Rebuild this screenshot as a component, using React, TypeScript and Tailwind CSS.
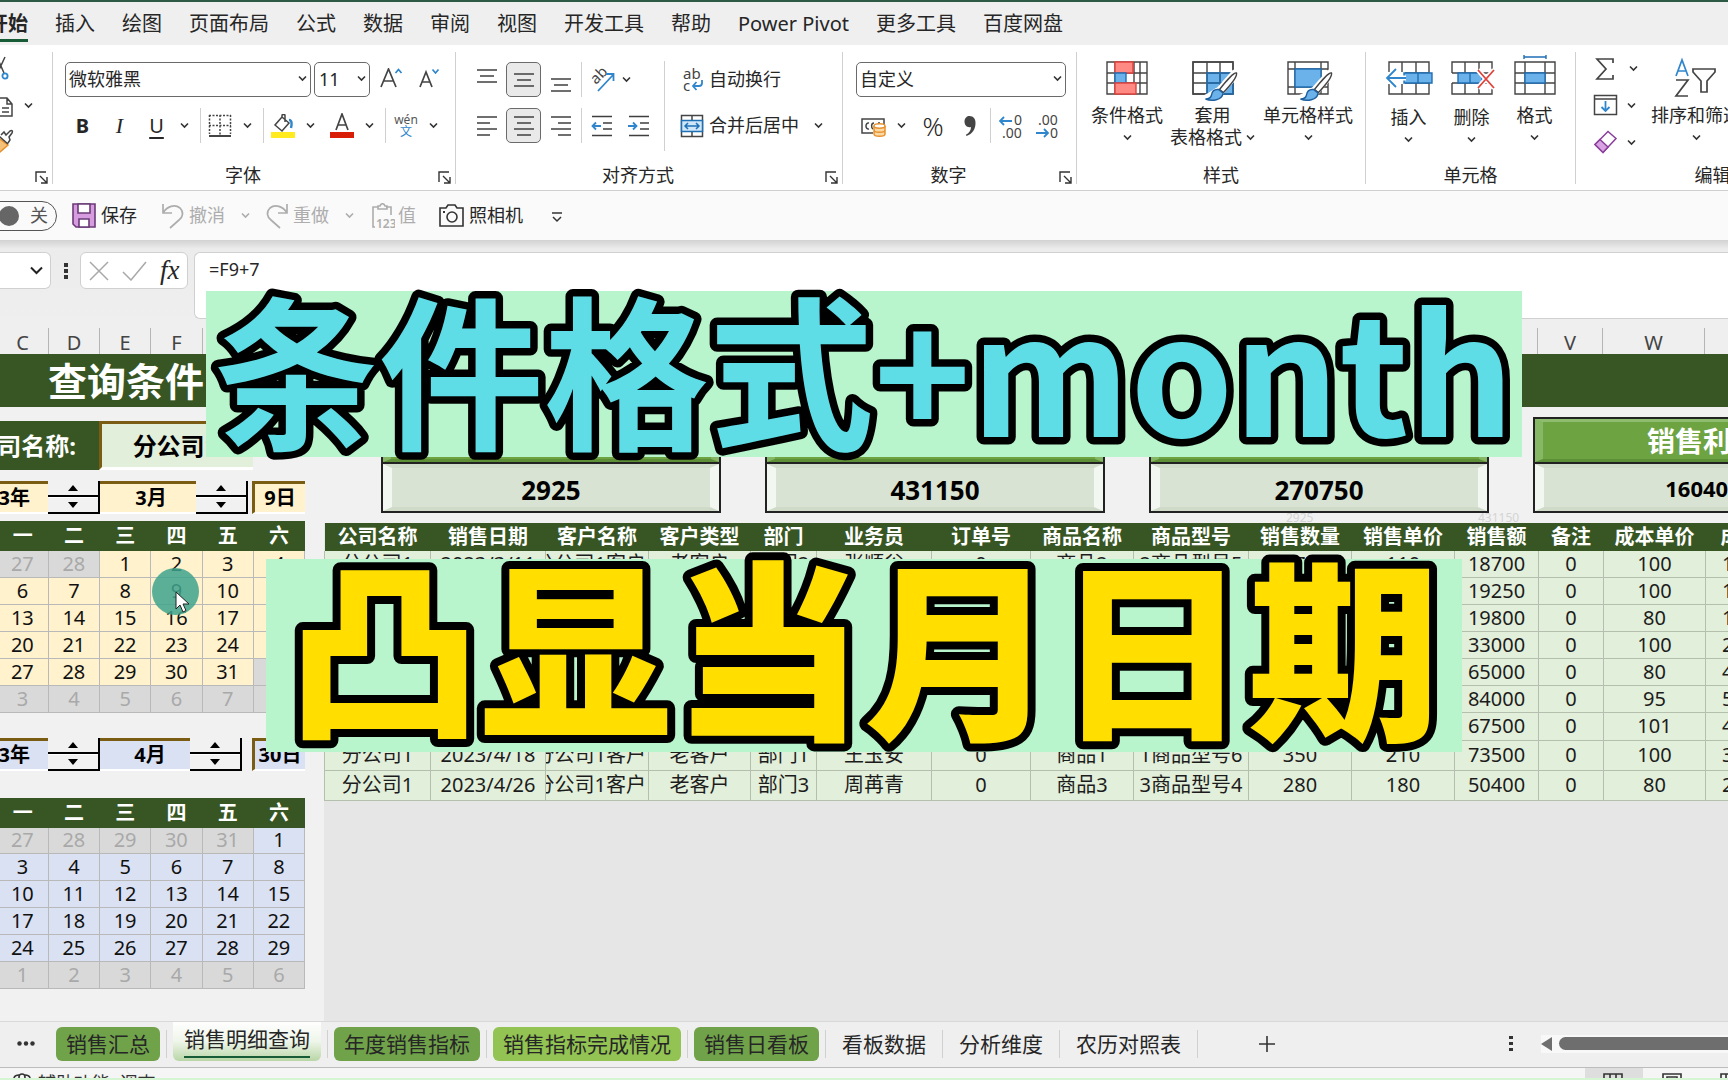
import React from "react";

type Kids = { children?: React.ReactNode };

/* ---------- small shared pieces ---------- */

function Chevron({ className = "text-[#333]" }: { className?: string }) {
  return (
    <svg width="9" height="7" viewBox="0 0 9 7" className={className} fill="none" stroke="currentColor" strokeWidth="1.6">
      <path d="M1 1.500l3.500 3.500L8 1.500" />
    </svg>
  );
}

function Drop({ label, className = "w-[30px]" }: { label: string; className?: string }) {
  return (
    <button aria-label={label} className={`flex h-6 shrink-0 items-center justify-center ${className}`}>
      <Chevron />
    </button>
  );
}

function Rule({ className = "" }: { className?: string }) {
  return <div className={`w-px shrink-0 bg-[#d0d0d0] ${className}`} />;
}

function Launcher() {
  return (
    <button aria-label="对话框启动器" className="absolute right-[4px] bottom-0">
      <svg width="13" height="13" viewBox="0 0 13 13" fill="none" stroke="#333" strokeWidth="1.400">
        <path d="M1 11V1h10M5 5l6.500 6.500M12 6v6H6" />
      </svg>
    </button>
  );
}

function Group({ name, width, launcher, children }: Kids & { name: string; width: string; launcher?: boolean }) {
  return (
    <section aria-label={name} className={`relative flex h-[132px] shrink-0 flex-col border-r border-[#d0d0d0] ${width}`}>
      <div className="flex-1">{children}</div>
      <div className={`flex h-[18px] items-center justify-center text-[18px] leading-[18px] ${launcher ? "pr-[22px]" : ""}`}>{name}</div>
      {launcher && <Launcher />}
    </section>
  );
}

function Lines({ rows }: { rows: [number, number, number][] }) {
  return (
    <svg width="22" height="24" viewBox="0 0 22 24" stroke="#3f3f3f" strokeWidth="1.500">
      {rows.map(([y, a, b]) => (
        <path key={y} d={`M${a} ${y}H${b}`} />
      ))}
    </svg>
  );
}

function AlignButton({ label, rows, on, className = "" }: { label: string; rows: [number, number, number][]; on?: boolean; className?: string }) {
  return (
    <button
      aria-label={label}
      className={`flex h-[35px] w-[35px] shrink-0 items-center justify-center ${on ? "rounded-[5px] border border-[#6a6a6a] bg-[#e9e9e9]" : ""} ${className}`}
    >
      <Lines rows={rows} />
    </button>
  );
}

/* ---------- ribbon icons ---------- */

const BigGrid = ({ children }: Kids) => (
  <svg width="50" height="46" viewBox="0 0 50 46" fill="none" stroke="#444" strokeWidth="1.400">
    {children}
  </svg>
);

const Brush = () => (
  <g>
    <path d="M48.500 17.500L32 36C28 37 26 41 17.500 44.500" stroke="#fff" strokeWidth="9" />
    <path d="M48.500 18c.8 3-5 11-13 19.500l-4-3C38 26 46.500 17 48.500 18z" fill="#fff" stroke="#444" />
    <path d="M30.500 34.500c-4.500-.5-6.500 2-7 5.500-.5 2.500-3 4-6 4 6 2.500 17 1.500 17.500-6z" fill="#6cb2ea" stroke="#1f5f9c" />
  </g>
);

const ConditionalIcon = () => (
  <BigGrid>
    <path d="M5 7h40v32H5zM5 18h40M5 28h40M13 7v32M32 7v32M38 7v32" fill="#fff" />
    <path d="M13 7h18v11H13z" fill="#ff8a84" stroke="#e0423c" />
    <path d="M13 18h11v10H13z" fill="#6cb2ea" stroke="#1f6fb5" />
    <path d="M25 19h6v8h-6z" fill="#fff" stroke="none" />
    <path d="M13 28h21v11H13z" fill="#ff8a84" stroke="#e0423c" />
  </BigGrid>
);

const TableStyleIcon = () => (
  <BigGrid>
    <path d="M5 7h40v32H5z" fill="#fff" />
    <path d="M19 18h26v21H19z" fill="#6cb2ea" stroke="none" />
    <path d="M5 7h40v32H5zM5 18h40M5 28h40M19 7v32M32 7v32" />
    <path d="M19 18h26v21H19zM19 28h26M32 18v21" stroke="#1f6fb5" />
    <Brush />
  </BigGrid>
);

const CellStyleIcon = () => (
  <BigGrid>
    <path d="M5 7h40v32H5zM5 14h40M5 32h40M12 7v32M38 7v32" fill="#fff" />
    <path d="M12 14h26v18H12z" fill="#6cb2ea" stroke="#1f6fb5" />
    <Brush />
  </BigGrid>
);

const InsertIcon = () => (
  <BigGrid>
    <path d="M5 7h40v32H5zM18 7v32M32 7v32M5 18h40M5 28h40" fill="#fff" />
    <path d="M3 17h18v12H3z" fill="#fff" stroke="none" />
    <path d="M20 18h28v10H20z" fill="#6cb2ea" stroke="#1f6fb5" />
    <path d="M34 18v10" stroke="#1f6fb5" />
    <path d="M3 23h19M12 14l-9 9 9 9" stroke="#fff" strokeWidth="5" />
    <path d="M3 23h19M12 14l-9 9 9 9" stroke="#2f86cc" strokeWidth="1.800" />
  </BigGrid>
);

const DeleteIcon = () => (
  <BigGrid>
    <path d="M5 18V7h40v8M5 28v11h40v-8M18 7v11M32 7v11M18 28v11M32 28v11M5 18h40M5 28h40" />
    <path d="M11 18h24v10H11z" fill="#6cb2ea" stroke="#1f6fb5" />
    <path d="M23 18v10" stroke="#1f6fb5" />
    <path d="M31 15l16 18M47 15L31 33" stroke="#fff" strokeWidth="5" />
    <path d="M31 15l16 18M47 15L31 33" stroke="#e0423c" strokeWidth="1.800" />
  </BigGrid>
);

const FormatIcon = () => (
  <BigGrid>
    <path d="M5 7h40v32H5zM15 7v32M35 7v32M5 18h40M5 28h40" fill="#fff" />
    <path d="M15 18h20v10H15z" fill="#6cb2ea" stroke="#1f6fb5" />
    <path d="M14 2h22M14 0v4M36 0v4" stroke="#1f6fb5" />
  </BigGrid>
);

function BigButton({ icon, lines, width, drop = "below", low }: { icon: React.ReactNode; lines: string[]; width: string; drop?: "below" | "inline"; low?: boolean }) {
  return (
    <button className={`flex shrink-0 flex-col items-center pt-[3px] text-[18px] leading-[22px] whitespace-nowrap ${width}`}>
      {icon}
      <span className={low ? "mt-[5px]" : "mt-[3px]"}>{lines[0]}</span>
      {drop === "inline" ? (
        <span className="flex items-center gap-[4px]">
          {lines[1]}
          <Chevron />
        </span>
      ) : (
        <span className="mt-[8px]">
          <Chevron />
        </span>
      )}
    </button>
  );
}

/* ---------- ribbon ---------- */

function MenuBar() {
  const tabs = ["插入", "绘图", "页面布局", "公式", "数据", "审阅", "视图", "开发工具", "帮助", "Power Pivot", "更多工具", "百度网盘"];
  return (
    <nav className="flex h-[45px] shrink-0 gap-[27px] border-t-2 border-[#2c5a45] bg-[#efefef] text-[20px] leading-[44px] whitespace-nowrap">
      <button className="-ml-3 flex h-[40px] border-b-[3px] border-[#185c37] leading-[44px] font-bold">开始</button>
      {tabs.map((t) => (
        <button key={t} className="flex h-[42px]">
          {t}
        </button>
      ))}
    </nav>
  );
}

function ClipboardGroup() {
  return (
    <section className="relative h-[132px] w-[53px] shrink-0 border-r border-[#d0d0d0]">
      <svg width="36" height="105" viewBox="0 0 36 105" fill="none" stroke="#444" strokeWidth="1.500" className="block">
        <path d="M5 5L-2 20M-3 5L4 21" />
        <circle cx="5" cy="24" r="2.600" stroke="#2f86cc" strokeWidth="1.800" />
        <path d="M-3 46h10l5 6v12H-3zM7 46v6h5M2 56h7M2 60h7" />
        <path d="M0 87l8 6-9 8" fill="#f6c27a" stroke="#e8912d" />
        <path d="M-1 84l9 8M1 83l3-3 2 3 4-4c2-1 3 0 2 2l-3 4 1 3-2 3" />
      </svg>
      <button aria-label="复制选项" className="absolute top-[50px] left-[24px]">
        <Chevron />
      </button>
      <Launcher />
    </section>
  );
}

function FontGroup() {
  return (
    <Group name="字体" width="w-[403px]" launcher>
      <div className="mt-[10px] flex h-[35px] items-center pl-[12px]">
        <div className="relative">
          <select aria-label="字体" className="h-[35px] w-[246px] appearance-none rounded-[5px] border border-[#6a6a6a] bg-white pl-[3px] text-[18px]">
            <option>微软雅黑</option>
          </select>
          <span className="pointer-events-none absolute top-[13px] right-[4px] flex"><Chevron /></span>
        </div>
        <div className="relative ml-[3px]">
          <select aria-label="字号" className="h-[35px] w-[56px] appearance-none rounded-[5px] border border-[#6a6a6a] bg-white pl-[4px] text-[18px]">
            <option>11</option>
          </select>
          <span className="pointer-events-none absolute top-[13px] right-[4px] flex"><Chevron /></span>
        </div>
        <button aria-label="增大字号" className="ml-[10px]">
          <svg width="24" height="24" viewBox="0 0 24 24" fill="none" stroke="#444" strokeWidth="1.700">
            <path d="M1 19L8.500 1 16 19M4 13h9.500" />
            <path d="M15.500 5l3-3.500 3 3.500" stroke="#2f86cc" />
          </svg>
        </button>
        <button aria-label="减小字号" className="ml-[14px]">
          <svg width="24" height="24" viewBox="0 0 24 24" fill="none" stroke="#444" strokeWidth="1.700">
            <path d="M2 19L8 4l6 15M4 14h8" />
            <path d="M14.500 1.500l3 3.500 3-3.500" stroke="#2f86cc" />
          </svg>
        </button>
      </div>
      <div className="mt-[11px] flex h-[35px] items-center pl-[11px] text-[20px]">
        <button className="w-[37px] font-bold">B</button>
        <button className="w-[37px] font-['Liberation_Serif'] text-[22px] italic">I</button>
        <button className="w-[37px] underline underline-offset-4">U</button>
        <Drop label="下划线" className="w-[18px]" />
        <Rule className="mx-[7px] h-[35px]" />
        <button aria-label="边框">
          <svg width="24" height="24" viewBox="0 0 24 24" fill="none" stroke="#444" strokeWidth="1.500">
            <path d="M1 1.500h22M1.500 1v19M22.500 1v19M12 1v20M1 11.500h22" strokeDasharray="2 1.500" />
            <path d="M1 22h22" strokeWidth="2" />
          </svg>
        </button>
        <Drop label="边框选项" />
        <Rule className="mr-[7px] ml-px h-[35px]" />
        <button aria-label="填充颜色">
          <svg width="24" height="24" viewBox="0 0 24 24" fill="none" stroke="#444" strokeWidth="1.500">
            <path d="M0 18h24v6H0z" fill="#ffeb1f" stroke="none" />
            <path d="M11 3L4 11l7 6 7-8-7-6V1.500c0-1.500 3-1.500 3 0V8" />
            <path d="M18 6c3 0 3 4 2 8" stroke="#2f86cc" strokeWidth="2.400" />
          </svg>
        </button>
        <Drop label="填充选项" />
        <button aria-label="字体颜色" className="ml-[5px]">
          <svg width="24" height="26" viewBox="0 0 24 26" fill="none" stroke="#444" strokeWidth="1.700">
            <path d="M0 19h24v6H0z" fill="#d81e06" stroke="none" />
            <path d="M6 17l6-16 6 16M8 12h8" />
          </svg>
        </button>
        <Drop label="字体颜色选项" />
        <Rule className="mr-[8px] ml-px h-[35px]" />
        <button className="flex w-[24px] flex-col items-center text-[12px] leading-[12px] text-[#555]">
          <span>wén</span>
          <span className="text-[#2f86cc]">文</span>
        </button>
        <Drop label="拼音选项" />
      </div>
    </Group>
  );
}

function AlignGroup() {
  return (
    <Group name="对齐方式" width="w-[387px]" launcher>
      <div className="flex">
        <div className="pt-[10px] pl-[13px]">
          <div className="flex items-center">
            <AlignButton label="顶端对齐" rows={[[2, 1, 21], [8, 4, 18], [14, 1, 21]]} />
            <AlignButton label="垂直居中" on className="ml-[2px]" rows={[[6, 1, 21], [12, 4, 18], [18, 1, 21]]} />
            <AlignButton label="底端对齐" className="ml-[2px]" rows={[[11, 1, 21], [17, 4, 18], [23, 1, 21]]} />
            <Rule className="mx-[3px] h-[35px]" />
            <button aria-label="方向" className="ml-[5px]">
              <svg width="26" height="26" viewBox="0 0 26 26" fill="none" stroke="#2f86cc" strokeWidth="1.800">
                <text x="0" y="0" transform="translate(6 18) rotate(-45)" fontSize="15" fill="#444" stroke="none">ab</text>
                <path d="M8 24L23 8M16 7h7.500v7" />
              </svg>
            </button>
            <Drop label="方向选项" className="w-[20px]" />
          </div>
          <div className="mt-[11px] flex items-center">
            <AlignButton label="左对齐" rows={[[3, 1, 21], [9, 1, 14], [15, 1, 21], [21, 1, 14]]} />
            <AlignButton label="居中" on className="ml-[2px]" rows={[[3, 1, 21], [9, 4, 18], [15, 1, 21], [21, 4, 18]]} />
            <AlignButton label="右对齐" className="ml-[2px]" rows={[[3, 1, 21], [9, 8, 21], [15, 1, 21], [21, 8, 21]]} />
            <Rule className="mr-[9px] ml-[3px] h-[35px]" />
            <button aria-label="减少缩进量">
              <svg width="22" height="24" viewBox="0 0 22 24" fill="none" stroke="#3f3f3f" strokeWidth="1.500">
                <path d="M1 2.500h20M12 9h9M12 15h9M1 21.500h20" />
                <path d="M1 12h9M5 8.500L1.500 12 5 15.500" stroke="#2f86cc" strokeWidth="1.800" />
              </svg>
            </button>
            <button aria-label="增加缩进量" className="ml-[15px]">
              <svg width="22" height="24" viewBox="0 0 22 24" fill="none" stroke="#3f3f3f" strokeWidth="1.500">
                <path d="M1 2.500h20M12 9h9M12 15h9M1 21.500h20" />
                <path d="M0 12h9M5 8.500L8.500 12 5 15.500" stroke="#2f86cc" strokeWidth="1.800" />
              </svg>
            </button>
          </div>
        </div>
        <Rule className="mt-[9px] ml-[14px] h-[90px]" />
        <div className="pt-[10px] pl-[15px] text-[18px]">
          <button className="flex h-[35px] items-center">
            <svg width="25" height="26" viewBox="0 0 25 26" fill="none" stroke="#2f86cc" strokeWidth="1.800">
              <text x="3" y="12" fontSize="15" fill="#444" stroke="none">ab</text>
              <text x="3" y="24" fontSize="15" fill="#444" stroke="none">c</text>
              <path d="M22 13v3c0 2-1 3-3 3h-6M16.500 15L13 19l3.500 4" />
            </svg>
            <span className="ml-[4px]">自动换行</span>
          </button>
          <div className="mt-[11px] flex items-center">
            <button className="flex h-[35px] items-center">
              <svg width="25" height="24" viewBox="0 0 25 24" fill="none" stroke="#444" strokeWidth="1.500">
                <path d="M1.500 1.500h21v21h-21zM12 1v6M12 17v6" />
                <path d="M1.500 6.500h21v11h-21z" fill="#cfe6f8" stroke="#1f6fb5" />
                <path d="M5 12h14M8 9l-3 3 3 3M16 9l3 3-3 3" stroke="#1f6fb5" />
              </svg>
              <span className="ml-[4px]">合并后居中</span>
            </button>
            <Drop label="合并选项" className="w-[38px]" />
          </div>
        </div>
      </div>
    </Group>
  );
}

function NumberGroup() {
  return (
    <Group name="数字" width="w-[234px]" launcher>
      <div className="relative mt-[10px] ml-[13px] w-[210px]">
        <select aria-label="数字格式" className="h-[35px] w-full appearance-none rounded-[5px] border border-[#6a6a6a] bg-white pl-[3px] text-[18px]">
          <option>自定义</option>
        </select>
        <span className="pointer-events-none absolute top-[13px] right-[4px] flex"><Chevron /></span>
      </div>
      <div className="mt-[11px] flex h-[35px] items-center pl-[18px]">
        <button aria-label="会计数字格式">
          <svg width="25" height="24" viewBox="0 0 25 24" fill="none" stroke="#444" strokeWidth="1.500">
            <path d="M12 19H1V5h22v6M8 9c-4-1-4 7 0 6M13 9c-3 0-3 5-1 6M18 8v2" />
            <path d="M13 12v8c0 3 11 3 11 0v-8M13 16c0 3 11 3 11 0" fill="#fbd9a5" stroke="#e8912d" />
            <ellipse cx="18.500" cy="12" rx="5.500" ry="2.200" fill="#fff" stroke="#e8912d" />
          </svg>
        </button>
        <Drop label="货币选项" />
        <button className="ml-[5px] w-[24px] text-[26px] leading-none font-light">%</button>
        <button aria-label="千位分隔样式" className="ml-[18px]">
          <svg width="14" height="24" viewBox="0 0 14 24" fill="#444">
            <path d="M6.500 2c4 0 6 3 6 7 0 6-3 11-9 13l-.6-1.200C6.500 19 8 16 8 13c-4 1-6.500-2-6.500-5.500C1.500 4 4 2 6.500 2z" />
          </svg>
        </button>
        <Rule className="mr-[8px] ml-[13px] h-[35px]" />
        <button aria-label="增加小数位数">
          <svg width="24" height="26" viewBox="0 0 24 26" fill="none" stroke="#2f86cc" strokeWidth="1.800">
            <text x="15" y="12" fontSize="14" fill="#444" stroke="none">0</text>
            <text x="3" y="25" fontSize="14" fill="#444" stroke="none">.00</text>
            <path d="M1 8h12M5 4L1 8l4 4" />
          </svg>
        </button>
        <button aria-label="减少小数位数" className="ml-[12px]">
          <svg width="24" height="26" viewBox="0 0 24 26" fill="none" stroke="#2f86cc" strokeWidth="1.800">
            <text x="3" y="12" fontSize="14" fill="#444" stroke="none">.00</text>
            <text x="15" y="25" fontSize="14" fill="#444" stroke="none">0</text>
            <path d="M1 20h12M9 16l4 4-4 4" />
          </svg>
        </button>
      </div>
    </Group>
  );
}

function Ribbon() {
  return (
    <div className="flex h-[145px] shrink-0 overflow-hidden bg-white pt-[7px]">
      <ClipboardGroup />
      <FontGroup />
      <AlignGroup />
      <NumberGroup />
      <Group name="样式" width="w-[289px]">
        <div className="flex pl-[12px]">
          <BigButton icon={<ConditionalIcon />} lines={["条件格式"]} width="w-[76px]" />
          <BigButton icon={<TableStyleIcon />} lines={["套用", "表格格式"]} width="w-[95px]" drop="inline" />
          <BigButton icon={<CellStyleIcon />} lines={["单元格样式"]} width="w-[96px]" />
        </div>
      </Group>
      <Group name="单元格" width="w-[210px]">
        <div className="flex pl-[11px]">
          <BigButton icon={<InsertIcon />} lines={["插入"]} width="w-[63px]" low />
          <BigButton icon={<DeleteIcon />} lines={["删除"]} width="w-[63px]" low />
          <BigButton icon={<FormatIcon />} lines={["格式"]} width="w-[63px]" />
        </div>
      </Group>
      <Group name="编辑" width="w-[274px]">
        <div className="flex">
          <div className="flex w-[72px] flex-col pl-[17px]">
            <div className="flex h-[33px] items-center">
              <svg width="26" height="22" viewBox="0 0 26 22" fill="none" stroke="#444" strokeWidth="1.700">
                <path d="M20 5V1H4l9 10-9 10h16v-4" />
              </svg>
              <Drop label="求和选项" className="ml-[4px] w-[20px]" />
            </div>
            <div className="flex h-[40px] items-center">
              <svg width="26" height="22" viewBox="0 0 26 22" fill="none" stroke="#444" strokeWidth="1.500">
                <path d="M1.500 1.500h22v19h-22zM1.500 5h22" />
                <path d="M12.500 7v10M8.500 13l4 4 4-4" stroke="#2f86cc" strokeWidth="1.800" />
              </svg>
              <Drop label="向下填充选项" className="ml-[2px] w-[20px]" />
            </div>
            <div className="flex h-[34px] items-center">
              <svg width="26" height="24" viewBox="0 0 26 24" fill="none" stroke="#8a3f9a" strokeWidth="1.500">
                <path d="M2 14.500L15 1.500l8 7-13 14z" fill="#fff" />
                <path d="M2 14.500l5-5 8 7.500-5 5.500z" fill="#d9a2e2" />
              </svg>
              <Drop label="清除选项" className="ml-[2px] w-[20px]" />
            </div>
          </div>
          <BigButton
            icon={
              <svg width="50" height="46" viewBox="0 0 50 46" fill="none" stroke="#444" strokeWidth="1.700">
                <path d="M5 21l6-16 6 16M7 16h8" stroke="#2f86cc" />
                <path d="M5 25h12L5 41h12" />
                <path d="M22 14h22v3l-8 9v11h-6V26l-8-9z" />
              </svg>
            }
            lines={["排序和筛选"]}
            width="w-[96px]"
          />
        </div>
      </Group>
    </div>
  );
}

function QuickAccess() {
  return (
    <div className="flex h-[50px] shrink-0 items-center border-t border-[#cfcfcf] bg-[#fafafa] text-[18px] whitespace-nowrap">
      <button role="switch" aria-checked="false" className="-ml-4 flex h-[30px] w-[73px] items-center gap-[11px] rounded-full border border-[#555] pl-[14px] text-[#555]">
        <span className="h-[20px] w-[20px] rounded-full bg-[#666]" />关
      </button>
      <button className="ml-[15px] flex items-center gap-[5px]">
        <svg width="24" height="25" viewBox="0 0 24 25" fill="#d79be0" stroke="#6b3b78" strokeWidth="1.600">
          <path d="M1 1h22v23H4l-3-3z" />
          <path d="M6 1h12v9H6zM7 24v-8h10v8z" fill="#fff" />
        </svg>
        保存
      </button>
      <button className="ml-[24px] flex items-center gap-[5px] text-[#adadad]" disabled>
        <svg width="23" height="26" viewBox="0 0 23 26" fill="none" stroke="currentColor" strokeWidth="1.700">
          <path d="M2 1v9h9M2 10c4-7 12-9 17-5 4 4 3 9-1 12l-9 8" />
        </svg>
        撤消
      </button>
      <span className="ml-[16px]"><Chevron className="text-[#adadad]" /></span>
      <button className="ml-[16px] flex items-center gap-[4px] text-[#adadad]" disabled>
        <svg width="23" height="26" viewBox="0 0 23 26" fill="none" stroke="currentColor" strokeWidth="1.700">
          <path d="M21 1v9h-9M21 10C17 3 9 1 4 5c-4 4-3 9 1 12l9 8" />
        </svg>
        重做
      </button>
      <span className="ml-[16px]"><Chevron className="text-[#adadad]" /></span>
      <button className="ml-[17px] flex items-center gap-[3px] text-[#adadad]" disabled>
        <svg width="24" height="26" viewBox="0 0 24 26" fill="none" stroke="currentColor" strokeWidth="1.600">
          <path d="M4 24H2V4h5M15 4h5v8M7 6V3h2c1-3 4-3 5 0h2v3z" />
          <text x="5" y="25" fontSize="12" fontWeight="600" fill="currentColor" stroke="none">123</text>
        </svg>
        值
      </button>
      <button className="ml-[23px] flex items-center gap-[5px]">
        <svg width="25" height="24" viewBox="0 0 25 24" fill="none" stroke="#333" strokeWidth="1.600">
          <path d="M1 4h6l2-3h7l2 3h6v18H1z" />
          <circle cx="13" cy="13" r="5" />
          <path d="M4 8h2" strokeWidth="2" />
        </svg>
        照相机
      </button>
      <button aria-label="自定义快速访问工具栏" className="mt-[2px] ml-[28px]">
        <svg width="12" height="12" viewBox="0 0 12 12" fill="none" stroke="#333" strokeWidth="1.500">
          <path d="M1 2h10M2 6l4 4 4-4" />
        </svg>
      </button>
    </div>
  );
}

function FormulaBar() {
  return (
    <div className="flex h-[88px] shrink-0 items-start bg-gradient-to-b from-[#d2d2d2] via-[#ececec] via-10% to-[#efefef] pt-[12px]">
      <button aria-label="名称框" className="flex h-[37px] w-[51px] shrink-0 items-center justify-end rounded-r-[6px] border border-l-0 border-[#d0d0d0] bg-white pr-[7px]">
        <svg width="13" height="9" viewBox="0 0 13 9" fill="none" stroke="#222" strokeWidth="2"><path d="M1 1.500l5.500 5.500L12 1.500" /></svg>
      </button>
      <svg width="29" height="37" viewBox="0 0 29 37" fill="#333" className="shrink-0">
        <path d="M13 11h4v4h-4zM13 17h4v4h-4zM13 23h4v4h-4z" />
      </svg>
      <div className="flex h-[37px] w-[108px] shrink-0 items-center rounded-[6px] border border-[#d0d0d0] bg-white pl-[8px]">
        <button aria-label="取消"><svg width="20" height="20" viewBox="0 0 20 20" fill="none" stroke="#a8a8a8" strokeWidth="1.500"><path d="M1 1l18 18M19 1L1 19" /></svg></button>
        <button aria-label="输入" className="ml-[13px]"><svg width="25" height="20" viewBox="0 0 25 20" fill="none" stroke="#a8a8a8" strokeWidth="1.500"><path d="M1 11l8 8L24 1" /></svg></button>
        <button className="ml-[13px] font-['Liberation_Serif'] text-[27px] leading-none italic">fx</button>
      </div>
      <div className="ml-[6px] h-[67px] flex-1 rounded-l-[6px] border border-r-0 border-[#d0d0d0] bg-white">
        <input aria-label="编辑栏" defaultValue="=F9+7" className="mt-[3px] h-[26px] w-full bg-transparent pl-[14px] text-[18px] outline-none" />
      </div>
    </div>
  );
}

/* ---------- worksheet ---------- */

function ColumnHeaders() {
  const cols: [string, string][] = [
    ["C", "w-[52px]"], ["D", "w-[51px]"], ["E", "w-[51px]"], ["F", "w-[52px]"], ["G", "w-[51px]"], ["H", "w-[51px]"], ["I", "w-[19px]"],
    ["J", "w-[106px]"], ["K", "w-[115px]"], ["L", "w-[103px]"], ["M", "w-[102px]"], ["N", "w-[66px]"], ["O", "w-[115px]"], ["P", "w-[99px]"],
    ["Q", "w-[103px]"], ["R", "w-[115px]"], ["S", "w-[103px]"], ["T", "w-[103px]"], ["U", "w-[84px]"], ["V", "w-[65px]"], ["W", "w-[102px]"], ["X", "w-[90px]"],
  ];
  return (
    <div className="-ml-[3px] flex h-[26px] shrink-0 bg-[#efefef] text-[20px] leading-[30px] text-[#444]">
      {cols.map(([c, w]) => (
        <div key={c} className={`shrink-0 border-r border-[#b5b5b5] text-center ${w}`}>{c}</div>
      ))}
    </div>
  );
}

const Spinner = () => (
  <div className="flex h-[33px] w-[52px] shrink-0 flex-col border-r-2 border-black">
    <button aria-label="增加" className="flex h-[16px] items-center justify-center border-b-2 border-black bg-[#f1f1f1]">
      <svg width="10" height="6" viewBox="0 0 10 6"><path d="M0 6l5-6 5 6z" /></svg>
    </button>
    <button aria-label="减少" className="flex h-[17px] items-center justify-center border-t border-b-2 border-t-white border-b-black bg-[#f1f1f1]">
      <svg width="10" height="6" viewBox="0 0 10 6"><path d="M0 0l5 6 5-6z" /></svg>
    </button>
  </div>
);

function DateRow({ month, day, blue }: { month: string; day: string; blue?: boolean }) {
  const cell = `flex h-[33px] shrink-0 items-center justify-center border-t-[3px] border-b-2 border-t-[#7a5c12] border-b-white ${blue ? "bg-[#d9e1f2]" : "bg-[#fff2cc]"}`;
  return (
    <div className="flex text-[20px] leading-[20px] font-bold whitespace-nowrap text-black">
      <div className={`${cell} w-[51px] justify-end pr-[18px]`}>2023年</div>
      <Spinner />
      <div className={`${cell} ${blue ? "w-[90px] pl-[10px]" : "w-[96px] pl-[6px]"}`}>{month}</div>
      <Spinner />
      <div className={`${cell} ${blue ? "ml-[10px]" : "ml-[4px]"} w-[53px] border-l-[3px] border-l-[#7a5c12]`}>{day}</div>
    </div>
  );
}

function Calendar({ weeks, blue }: { weeks: (number | string)[][]; blue?: boolean }) {
  return (
    <table className="w-[308px] table-fixed border-collapse text-[20px] leading-[24px]">
      <thead>
        <tr className="h-[30px] bg-[#375623] text-white">
          {["一", "二", "三", "四", "五", "六"].map((d) => <th key={d} className="p-0 text-[20px] font-bold">{d}</th>)}
        </tr>
      </thead>
      <tbody className="text-center">
        {weeks.map((w, i) => (
          <tr key={i} className={i === 0 ? "h-[26px]" : "h-[27px]"}>
            {w.map((d, j) => (
              <td
                key={j}
                className={`border-r border-b border-[#b9b9b9] p-0 ${typeof d === "string" ? "bg-[#d9d9d9] text-[#a9a9a9]" : blue ? "bg-[#d9e1f2] text-[#111]" : "bg-[#fff2cc] text-[#111]"}`}
              >
                {d}
              </td>
            ))}
          </tr>
        ))}
      </tbody>
    </table>
  );
}

const march = [
  ["27", "28", 1, 2, 3, 4], [6, 7, 8, 9, 10, 11], [13, 14, 15, 16, 17, 18], [20, 21, 22, 23, 24, 25], [27, 28, 29, 30, 31, "1"], ["3", "4", "5", "6", "7", "8"],
];
const april = [
  ["27", "28", "29", "30", "31", 1], [3, 4, 5, 6, 7, 8], [10, 11, 12, 13, 14, 15], [17, 18, 19, 20, 21, 22], [24, 25, 26, 27, 28, 29], ["1", "2", "3", "4", "5", "6"],
];

function QueryPanel() {
  return (
    <aside className="w-[324px] shrink-0 overflow-hidden bg-[#f1f1f1]">
      <div className="mt-[14px] flex h-[49px] text-[24px] font-bold whitespace-nowrap">
        <div className="flex w-[99px] shrink-0 items-center justify-end bg-[#375623] pr-[23px] text-white">公司名称:</div>
        <div className="flex w-[154px] items-center justify-center border-t-[3px] border-b-[3px] border-l-[3px] border-t-[#7a5c12] border-b-white border-l-[#7a5c12] bg-[#e2efda] pr-[4px] text-black">分公司1</div>
      </div>
      <div className="-ml-[3px]">
        <div className="mt-[11px]"><DateRow month="3月" day="9日" /></div>
        <div className="mt-[7px]"><Calendar weeks={march} /></div>
        <div className="mt-[25px]"><DateRow month="4月" day="30日" blue /></div>
        <div className="mt-[27px]"><Calendar weeks={april} blue /></div>
      </div>
    </aside>
  );
}

function Card({ title, value, small }: { title: string; value: string; small?: boolean }) {
  return (
    <div className="flex h-[96px] w-[340px] shrink-0 flex-col border-2 border-[#222] leading-none font-bold">
      <div className="flex h-[43px] shrink-0 items-center justify-center border-x-[8px] border-y-[3px] border-x-[#86b765] border-t-[#8fbd70] border-b-[#5c8f36] bg-[#6ea342] text-[28px] text-white">{title}</div>
      <div className="h-[2px] shrink-0 bg-[#222]" />
      <div className={`flex min-h-0 flex-1 items-center justify-center border-x-[9px] border-t-[4px] border-b-[4px] border-x-[#f3f7f1] border-t-[#d2dccb] border-b-[#cfdac8] bg-[#d9e3d3] text-black ${small ? "text-[22px]" : "pt-[4px] text-[26px]"}`}>
        {value}
      </div>
    </div>
  );
}

const columns: [string, string][] = [
  ["公司名称", "w-[106px]"], ["销售日期", "w-[115px]"], ["客户名称", "w-[103px]"], ["客户类型", "w-[102px]"], ["部门", "w-[66px]"], ["业务员", "w-[115px]"],
  ["订单号", "w-[99px]"], ["商品名称", "w-[103px]"], ["商品型号", "w-[115px]"], ["销售数量", "w-[103px]"], ["销售单价", "w-[103px]"], ["销售额", "w-[84px]"],
  ["备注", "w-[65px]"], ["成本单价", "w-[102px]"], ["成本额", "w-[90px]"],
];

const rows = [
  ["2023/3/11", "部门2", "张顺谷", "商品2", "2商品型号5", 170, 110, 18700, 100, 17000],
  ["2023/3/14", "部门1", "王玉安", "商品1", "1商品型号2", 175, 110, 19250, 100, 17500],
  ["2023/3/18", "部门3", "周苒青", "商品3", "3商品型号1", 180, 110, 19800, 80, 14400],
  ["2023/3/22", "部门2", "张顺谷", "商品2", "2商品型号3", 220, 150, 33000, 100, 22000],
  ["2023/3/26", "部门1", "王玉安", "商品1", "1商品型号5", 500, 130, 65000, 80, 40000],
  ["2023/4/2", "部门3", "周苒青", "商品3", "3商品型号2", 560, 150, 84000, 95, 53200],
  ["2023/4/10", "部门2", "张顺谷", "商品2", "2商品型号4", 450, 150, 67500, 101, 45450],
  ["2023/4/18", "部门1", "王玉安", "商品1", "1商品型号6", 350, 210, 73500, 100, 35000],
  ["2023/4/26", "部门3", "周苒青", "商品3", "3商品型号4", 280, 180, 50400, 80, 22400],
];

function SalesTable() {
  return (
    <table className="w-[1471px] table-fixed border-collapse text-center text-[20px] leading-[24px] whitespace-nowrap text-[#1c1c1c]">
      <thead>
        <tr className="h-[28px] bg-[#375623] text-white">
          {columns.map(([c, w]) => <th key={c} className={`p-0 font-bold ${w}`}>{c}</th>)}
        </tr>
      </thead>
      <tbody>
        {rows.map((r, i) => {
          const cells = ["分公司1", r[0], "分公司1客户", "老客户", r[1], r[2], 0, r[3], r[4], r[5], r[6], r[7], 0, r[8], r[9]];
          return (
            <tr key={i} className={i === 0 ? "h-[26px]" : i < 6 ? "h-[27px]" : i === 6 ? "h-[28px]" : "h-[30px]"}>
              {cells.map((c, j) => (
                <td key={j} className="overflow-hidden border border-t-0 border-[#b4bfae] bg-[#e2efda] p-0">
                  {j === 2 ? <div className="flex justify-end overflow-hidden pr-[2px]">{c}</div> : c}
                </td>
              ))}
            </tr>
          );
        })}
      </tbody>
    </table>
  );
}

function Sheet() {
  return (
    <main className="flex min-h-0 flex-1 flex-col overflow-hidden bg-[#e6e6e6]">
      <ColumnHeaders />
      <h1 className="flex h-[53px] shrink-0 items-center bg-[#375623] pl-[48px] text-[39px] leading-none font-bold text-white">查询条件</h1>
      <div className="flex min-h-0 flex-1">
        <QueryPanel />
        <div className="min-w-0 flex-1 overflow-hidden">
          <div className="bg-[#f1f1f1] pt-[10px]">
            <div className="flex gap-[44px] pl-[57px]">
              <Card title="销售数量" value="2925" />
              <Card title="销售金额" value="431150" />
              <Card title="销售成本" value="270750" />
              <Card title="销售利润" value="160400" small />
            </div>
            <div className="flex h-[10px] items-center text-[12px] leading-[10px] text-[#d4d4d4]">
              <span className="ml-[962px] w-[192px]">2925</span>
              <span>431150</span>
            </div>
          </div>
          <SalesTable />
        </div>
      </div>
    </main>
  );
}

/* ---------- bottom bars ---------- */

const plainTab = "flex h-[34px] shrink-0 items-center rounded-[6px] px-[10px] leading-[34px]";

function SheetTabs() {
  const sep = <Rule className="mx-[6px] h-[28px]" />;
  return (
    <footer className="flex h-[46px] shrink-0 items-center border-t border-[#d8d8d8] bg-[#efefef] pb-[2px] text-[21px] whitespace-nowrap">
      <button aria-label="更多工作表" className="flex w-[56px] shrink-0 items-center pl-[17px]">
        <svg width="18" height="5" viewBox="0 0 18 5" fill="#333"><circle cx="2.500" cy="2.500" r="2.200" /><circle cx="9" cy="2.500" r="2.200" /><circle cx="15.500" cy="2.500" r="2.200" /></svg>
      </button>
      <button className={`${plainTab} bg-[#70a24a]`}>销售汇总</button>
      <Rule className="mx-[6px] h-[28px]" />
      <button aria-current="page" className="flex h-[39px] shrink-0 self-start rounded-b-[6px] bg-gradient-to-b from-white via-[#eef5e9] to-[#b9d6a6] px-[11px]">
        <span className="h-[36px] border-b-2 border-[#185c37] leading-[35px]">销售明细查询</span>
      </button>
      <Rule className="mx-[6px] h-[28px]" />
      <button className={`${plainTab} bg-[#70a24a]`}>年度销售指标</button>
      {sep}
      <button className={`${plainTab} bg-[#92c353]`}>销售指标完成情况</button>
      {sep}
      <button className={`${plainTab} bg-[#70a24a]`}>销售日看板</button>
      {sep}
      <button className={plainTab}>看板数据</button>
      {sep}
      <button className={plainTab}>分析维度</button>
      {sep}
      <button className={plainTab}>农历对照表</button>
      {sep}
      <button aria-label="新建工作表" className="ml-[54px]">
        <svg width="18" height="18" viewBox="0 0 18 18" stroke="#333" strokeWidth="1.600"><path d="M9 1v16M1 9h16" /></svg>
      </button>
      <div className="min-w-0 flex-1" />
      <svg width="4" height="16" viewBox="0 0 4 16" fill="#333" className="mr-[28px]"><path d="M0 0h4v3H0zM0 6h4v3H0zM0 12h4v3H0z" /></svg>
      <div className="flex h-[18px] w-[187px] shrink-0 items-center bg-[#f8f8f8]">
        <svg width="11" height="14" viewBox="0 0 11 14" fill="#6e6e6e"><path d="M11 0v14L0 7z" /></svg>
        <div className="ml-[7px] h-[13px] flex-1 rounded-l-full bg-[#6e6e6e]" />
      </div>
    </footer>
  );
}

function StatusBar() {
  return (
    <div className="flex h-[13px] shrink-0 items-start overflow-hidden border-t border-b-2 border-t-[#bdbdbd] border-b-[#d5f5d3] bg-[#f5f5f5] text-[18px] leading-[20px] text-[#333]">
      <svg width="20" height="20" viewBox="0 0 20 20" fill="none" stroke="#333" strokeWidth="1.600" className="mt-[5px] ml-[12px] shrink-0">
        <circle cx="10" cy="4" r="3" /><path d="M7 2C2 2 0 6 5 8M13 2c5 0 7 4 2 6" />
      </svg>
      <span className="mt-[5px] ml-[6px]">辅助功能: 调查</span>
      <div className="flex-1" />
      <button aria-label="普通" className="h-[20px] w-[58px] bg-[#dedede] pt-[5px] pl-[18px]">
        <svg width="20" height="16" viewBox="0 0 20 16" fill="none" stroke="#333" strokeWidth="1.600"><path d="M1 1h18v14H1zM7 1v14M13 1v14M1 6h18M1 11h18" /></svg>
      </button>
      <button aria-label="页面布局视图" className="h-[20px] w-[58px] pt-[5px] pl-[19px]">
        <svg width="20" height="16" viewBox="0 0 20 16" fill="none" stroke="#333" strokeWidth="1.600"><path d="M1 1h18v14H1zM5 4h10v11H5zM7 7h6" /></svg>
      </button>
      <button aria-label="分页预览" className="h-[20px] w-[27px] overflow-hidden pt-[5px] pl-[19px]">
        <svg width="20" height="16" viewBox="0 0 20 16" fill="none" stroke="#333" strokeWidth="1.600"><path d="M1 1h18v14H1zM6 1v14" /></svg>
      </button>
    </div>
  );
}

/* ---------- caption overlays and pointer ---------- */

function Captions() {
  return (
    <>
      <div className="absolute top-[291px] left-[206px] bg-[#b9f5cc]">
        <svg width="1316" height="166" viewBox="0 0 1316 166" className="block overflow-visible">
          <text x="658" y="146" textAnchor="middle" fontSize="165" strokeWidth="15" stroke="#000" fill="#5fdde6" strokeLinejoin="round" className="font-['Noto_Sans_CJK_SC'] font-bold [paint-order:stroke_fill]">
            条件格式+month
          </text>
        </svg>
      </div>
      <div className="absolute top-[559px] left-[266px] bg-[#b9f5cc]">
        <svg width="1196" height="193" viewBox="0 0 1196 193" className="block overflow-visible">
          <text x="598" y="166" textAnchor="middle" fontSize="192" strokeWidth="16" stroke="#000" fill="#ffde00" strokeLinejoin="round" className="font-['Noto_Sans_CJK_SC'] font-black [paint-order:stroke_fill]">
            凸显当月日期
          </text>
        </svg>
      </div>
    </>
  );
}

function Pointer() {
  return (
    <div className="absolute top-[568px] left-[152px] h-[47px] w-[47px] rounded-full bg-[#3fa38d]/85">
      <svg width="16" height="22" viewBox="0 0 16 22" className="absolute top-[23px] left-[23px]" fill="#fff" stroke="#222" strokeWidth="1">
        <path d="M1 1v17l4-4 3 7 3-1.500-3-6.500h6z" />
      </svg>
    </div>
  );
}

export default function App() {
  return (
    <div className="relative flex h-screen flex-col overflow-hidden bg-[#efefef] font-['Noto_Sans','Noto_Sans_CJK_SC',sans-serif] text-[#262626]">
      <MenuBar />
      <Ribbon />
      <QuickAccess />
      <FormulaBar />
      <Sheet />
      <SheetTabs />
      <StatusBar />
      <Captions />
      <Pointer />
    </div>
  );
}
